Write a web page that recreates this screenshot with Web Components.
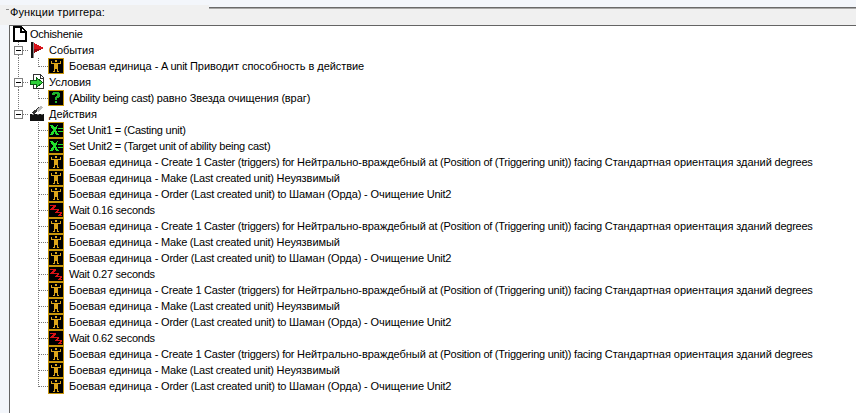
<!DOCTYPE html>
<html>
<head>
<meta charset="utf-8">
<title>Функции триггера</title>
<style>
  html, body { margin: 0; height: 100%; }
  body { background: #f3f6fb; overflow: hidden; font: 11px "Liberation Sans", sans-serif; color: #000; }
  trigger-row { letter-spacing: -.05px; }
  trigger-row .lat { letter-spacing: -.25px; }
</style>
</head>
<body>
<trigger-panel label="Функции триггера:">
  <trigger-row kind="root" icon="doc">Ochishenie</trigger-row>
  <trigger-row kind="group" icon="flag">События</trigger-row>
  <trigger-row kind="event" icon="unit">Боевая единица - A unit Приводит способность в действие</trigger-row>
  <trigger-row kind="group" icon="cond">Условия</trigger-row>
  <trigger-row kind="event" icon="quest">(Ability being cast) равно Звезда очищения (враг)</trigger-row>
  <trigger-row kind="group-last" icon="clap">Действия</trigger-row>
  <trigger-row kind="action" icon="set">Set Unit1 = (Casting unit)</trigger-row>
  <trigger-row kind="action" icon="set">Set Unit2 = (Target unit of ability being cast)</trigger-row>
  <trigger-row kind="action" icon="unit">Боевая единица - Create 1 Caster (triggers) for Нейтрально-враждебный at (Position of (Triggering unit)) facing Стандартная ориентация зданий degrees</trigger-row>
  <trigger-row kind="action" icon="unit">Боевая единица - Make (Last created unit) Неуязвимый</trigger-row>
  <trigger-row kind="action" icon="unit">Боевая единица - Order (Last created unit) to Шаман (Орда) - Очищение Unit2</trigger-row>
  <trigger-row kind="action" icon="wait">Wait 0.16 seconds</trigger-row>
  <trigger-row kind="action" icon="unit">Боевая единица - Create 1 Caster (triggers) for Нейтрально-враждебный at (Position of (Triggering unit)) facing Стандартная ориентация зданий degrees</trigger-row>
  <trigger-row kind="action" icon="unit">Боевая единица - Make (Last created unit) Неуязвимый</trigger-row>
  <trigger-row kind="action" icon="unit">Боевая единица - Order (Last created unit) to Шаман (Орда) - Очищение Unit2</trigger-row>
  <trigger-row kind="action" icon="wait">Wait 0.27 seconds</trigger-row>
  <trigger-row kind="action" icon="unit">Боевая единица - Create 1 Caster (triggers) for Нейтрально-враждебный at (Position of (Triggering unit)) facing Стандартная ориентация зданий degrees</trigger-row>
  <trigger-row kind="action" icon="unit">Боевая единица - Make (Last created unit) Неуязвимый</trigger-row>
  <trigger-row kind="action" icon="unit">Боевая единица - Order (Last created unit) to Шаман (Орда) - Очищение Unit2</trigger-row>
  <trigger-row kind="action" icon="wait">Wait 0.62 seconds</trigger-row>
  <trigger-row kind="action" icon="unit">Боевая единица - Create 1 Caster (triggers) for Нейтрально-враждебный at (Position of (Triggering unit)) facing Стандартная ориентация зданий degrees</trigger-row>
  <trigger-row kind="action" icon="unit">Боевая единица - Make (Last created unit) Неуязвимый</trigger-row>
  <trigger-row kind="action" icon="unit" last>Боевая единица - Order (Last created unit) to Шаман (Орда) - Очищение Unit2</trigger-row>
</trigger-panel>

<script>
const GOLD = '#c8960a';
const MAN = '#dca51a';
const FRAME = `<rect x="0.5" y="0.5" width="15" height="15" fill="#000" stroke="${GOLD}"/>`;
const ICONS = {
  doc: `<path d="M1.500 1h8l4 4v10h-12z" fill="#fff" stroke="#000" stroke-width="2"/><path d="M9 1v5h5" fill="none" stroke="#000" stroke-width="2"/>`,
  flag: `<rect x="1" y="0" width="2" height="16" fill="#111"/><rect x="3" y="0" width="1" height="16" fill="#888"/><path d="M4 1l10 5-10 5z" fill="#d8141c"/><path d="M4 7h8l-8 4z" fill="#98080e"/>`,
  cond: `<path d="M3.500 .5h7l3 3v11h-10z" fill="#fff" stroke="#333"/><path d="M10 1v3h3" fill="none" stroke="#333"/><path d="M.5 6.500h6v-3l6 5-6 5v-3h-6z" fill="#2fd03a" stroke="#0a5a12"/>`,
  clap: `<path d="M0 8h14v7H0z" fill="#111"/><path d="M1 7l8-6 3 1-8 6z" fill="#333"/><path d="M6 4l5-4 2 2-5 4z" fill="#bbb"/><path d="M2 8h2v1H2zM7 8h2v1H7zM11 8h2v1h-2z" fill="#777"/>`,
  unit: FRAME + `<path fill="${MAN}" d="M7 2h2v2H7zM3 3h1v2h8V3h1v3H3zM6 6h4v4H6zM6 10h2v1H7v3H5v-1h1zM8 10h2v3h1v1H9v-3H8z"/>`,
  quest: FRAME + `<path fill="#1fb52a" d="M4 5V3h1V2h6v1h1v4h-1v1H9v2H7V7h1V6h1V4H7v1zM7 11h2v2H7z"/>`,
  set: FRAME + `<path fill="#22e02c" d="M2 3h3l2 3 2-3h1L8 8l3 5H8L6.500 10 5 13H2l3-5zM10 6h5v1h-5zM10 9h5v1h-5z"/>`,
  wait: FRAME + `<path fill="#d81216" d="M2 3h6v1L5 7h3v1H2V7l3-3H2zM7 7h4v1L9 10h2v1H7v-1l2-2H7zM10 10h4v1l-2 2h2v1h-4v-1l2-2h-2z"/>`
};

class TriggerPanel extends HTMLElement {
  constructor() {
    super();
    this.attachShadow({ mode: 'open' });
  }

  connectedCallback() {
    this.shadowRoot.innerHTML = `
      <style>
        :host { display: flex; flex-direction: column; height: 413px; }
        .head { display: flex; height: 25px; flex: none; }
        .tab { width: 209px; margin-top: 5px; background: #f0f0f0; box-sizing: border-box; padding: 1px 0 0 10px; line-height: 13px; letter-spacing: .12px; position: relative; }
        .tab::before { content: ""; position: absolute; left: 6px; top: 4px; width: 3px; height: 1px; background: #8c8c8c; }
        .rest { flex: 1; margin-top: 7px; background: #f0f0f0; border-top: 1px solid #6a6a6a; box-shadow: inset 0 1px 0 #a8a8a8; }
        .body { flex: 1; display: flex; min-height: 0; }
        .strip { flex: none; width: 9px; background: #f3f6fb; }
        .tree { flex: 1; background: #fff; border-left: 1px solid #646464; border-top: 1px solid #646464; }
        .rows { display: flex; flex-direction: column; margin-left: -2px; }
      </style>
      <div class="head">
        <div class="tab">${this.getAttribute('label')}</div>
        <div class="rest"></div>
      </div>
      <div class="body">
        <div class="strip"></div>
        <div class="tree"><div class="rows"><slot></slot></div></div>
      </div>`;
  }
}

class TriggerRow extends HTMLElement {
  constructor() {
    super();
    this.attachShadow({ mode: 'open' });
  }

  cell(type) {
    // each cell is 20x16, its guide runs down x=10
    const v = (a, b) => `<path d="M10.500 ${a}V${b}"/>`;
    const h = (a, b) => `<path d="M${a} 8.500H${b}"/>`;
    let lines = '';
    let box = '';
    if (type === 'pipe') lines = v(0, 16);
    if (type === 'tee') lines = v(0, 16) + h(11, 20);
    if (type === 'elbow') lines = v(0, 9) + h(11, 20);
    if (type === 'box' || type === 'box-last') {
      lines = v(0, 4) + (type === 'box' ? v(13, 16) : '') + h(15, 20);
      box = `<rect x="6.500" y="4.500" width="8" height="8" fill="#fff" stroke="#808080"/><path d="M8 8.500h5" stroke="#000" fill="none"/>`;
    }
    return `<svg class="cell" width="20" height="16" viewBox="0 0 20 16" shape-rendering="crispEdges"><g fill="none" stroke="#777" stroke-dasharray="1 1">${lines}</g>${box}</svg>`;
  }

  connectedCallback() {
    const kind = this.getAttribute('kind');
    const icon = ICONS[this.getAttribute('icon')];
    const last = this.hasAttribute('last');
    let cells = '';
    if (kind === 'group') cells = this.cell('box');
    if (kind === 'group-last') cells = this.cell('box-last');
    if (kind === 'event') cells = this.cell('pipe') + this.cell('elbow');
    if (kind === 'action') cells = this.cell('blank') + this.cell(last ? 'elbow' : 'tee');
    // latin runs sit tighter than the cyrillic ones in the original font
    this.innerHTML = this.textContent.replace(/[A-Za-z0-9()=. ]{2,}/g, m => `<span class="lat">${m}</span>`);
    this.shadowRoot.innerHTML = `
      <style>
        :host { display: flex; height: 16px; align-items: center; white-space: nowrap; line-height: 16px; }
        :host([kind=root]) { padding-left: 4px; }
        .cell { flex: none; display: block; }
        .ico { flex: none; display: block; margin-right: 5px; }
        :host([kind=root]) .ico { margin-right: 2px; }
        :host([kind=group]) .ico, :host([kind=group-last]) .ico { margin-left: 2px; margin-right: 3px; }
        .txt { white-space: pre; }
      </style>
      ${cells}
      <svg class="ico" width="16" height="16" viewBox="0 0 16 16" shape-rendering="crispEdges">${icon}</svg>
      <span class="txt"><slot></slot></span>`;
  }
}

customElements.define('trigger-panel', TriggerPanel);
customElements.define('trigger-row', TriggerRow);
</script>
</body>
</html>
